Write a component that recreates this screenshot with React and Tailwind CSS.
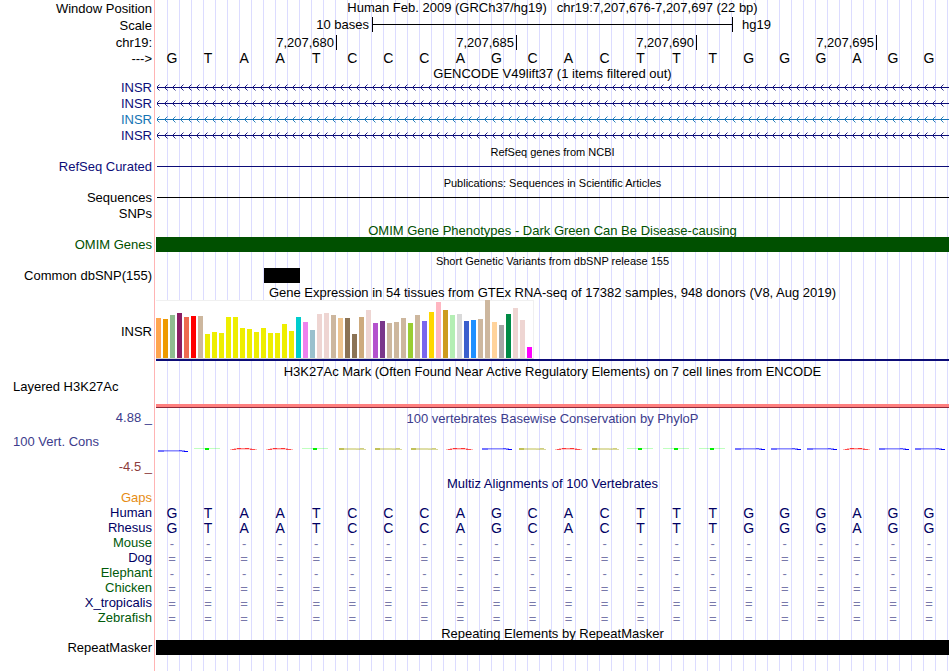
const BASES = "GTAATCCCAGCACTTTGGGAGG".split("");

const TISSUES = [
  [40, "#ffa54f"], [39, "#ee9a00"], [43, "#8fbc8f"], [45, "#8b1c62"], [41, "#ee6a50"], [42, "#ff0000"],
  [42, "#cdb79e"], [24, "#eeee00"], [26, "#eeee00"], [25, "#eeee00"], [41, "#eeee00"], [41, "#eeee00"],
  [30, "#eeee00"], [29, "#eeee00"], [26, "#eeee00"], [30, "#eeee00"], [25, "#eeee00"], [25, "#eeee00"],
  [34, "#eeee00"], [27, "#eeee00"], [41, "#00cdcd"], [36, "#ee82ee"], [28, "#9ac0cd"], [44, "#eed5d2"],
  [45, "#eed5d2"], [43, "#cdb79e"], [40, "#eec591"], [40, "#8b7355"], [24, "#8b7355"], [41, "#cdaa7d"],
  [48, "#eed5d2"], [35, "#b452cd"], [37, "#7a378b"], [35, "#cdb79e"], [36, "#cdb79e"], [40, "#cdb79e"],
  [35, "#9acd32"], [43, "#cdb79e"], [37, "#7a67ee"], [46, "#ffd700"], [56, "#ffb6c1"], [48, "#cd9b1d"],
  [43, "#b4eeb4"], [44, "#d9d9d9"], [37, "#3a5fcd"], [38, "#1e90ff"], [39, "#cdb79e"], [58, "#cdb79e"],
  [36, "#ffd39b"], [33, "#a6a6a6"], [44, "#008b45"], [50, "#eed5d2"], [38, "#eed5d2"], [11, "#ff00ff"],
];

const TRANSCRIPTS = [
  { id: "t1", color: "text-[#0c0c78]" },
  { id: "t2", color: "text-[#0c0c78]" },
  { id: "t3", color: "text-[#1473b4]" },
  { id: "t4", color: "text-[#0c0c78]" },
];

const SPECIES = [
  { name: "Human", color: "text-[#000064]", mark: null },
  { name: "Rhesus", color: "text-[#000064]", mark: null },
  { name: "Mouse", color: "text-[#005a0a]", mark: "-" },
  { name: "Dog", color: "text-[#000064]", mark: "=" },
  { name: "Elephant", color: "text-[#005a0a]", mark: "-" },
  { name: "Chicken", color: "text-[#005a0a]", mark: "=" },
  { name: "X_tropicalis", color: "text-[#000064]", mark: "=" },
  { name: "Zebrafish", color: "text-[#005a0a]", mark: "=" },
];

function Row({ label = "", height, color = "text-black", align = "justify-end pr-[2px]", children }) {
  return (
    <div className={"flex " + height}>
      <div className={"flex w-[154px] shrink-0 items-center whitespace-nowrap " + align + " " + color}>{label}</div>
      <div className="ml-px min-w-0 flex-1">{children}</div>
    </div>
  );
}

function Title({ children, color = "text-black" }) {
  return (
    <div className={"flex h-full items-center justify-center whitespace-nowrap pt-[2px] text-[13px] " + color}>
      {children}
    </div>
  );
}

function SmallTitle({ children }) {
  return (
    <div className="flex h-full items-center justify-center whitespace-nowrap pt-[3px] text-[11px]">{children}</div>
  );
}

function BaseGrid({ children }) {
  return <div className="-ml-px mr-[3px] grid h-full grid-cols-22 items-center text-center">{children}</div>;
}

function Letters({ mark }) {
  return (
    <BaseGrid>
      {BASES.map((b, i) => (
        <span key={i} className={mark ? "pt-px text-[13px] text-[#7878aa]" : "text-[14px] leading-[14px]"}>
          {mark || b}
        </span>
      ))}
    </BaseGrid>
  );
}

function Line({ color }) {
  return (
    <div className="flex h-full items-center">
      <div className={"mt-px ml-[2px] mr-px h-px flex-1 " + color} />
    </div>
  );
}

function Arrows({ id }) {
  return (
    <svg className="block h-full w-full" aria-hidden="true">
      <defs>
        <pattern id={id} x="2" y="0" width="8" height="16" patternUnits="userSpaceOnUse">
          <path d="M0.5 8.5L3.5 5.5M0.5 8.5L3.5 11.5" stroke="currentColor" strokeWidth="0.9" fill="none" />
          <path d="M0 8.5H8" stroke="currentColor" />
        </pattern>
      </defs>
      <svg x="-1" width="100%" height="16">
        <rect x="3" width="100%" height="16" fill={"url(#" + id + ")"} />
      </svg>
    </svg>
  );
}

function Squiggle({ base, low }) {
  return (
    <svg className="block h-[32px] w-[36px]" viewBox="0 0 36 32" aria-hidden="true">
      {base === "G" && (
        <g transform={low ? "translate(0 2)" : undefined}>
          <rect x="4" y="22" width="6" height="2" fill="#0000ff" opacity="0.55" />
          <rect x="10" y="22" width="18" height="1" fill="#0000ff" opacity="0.45" />
          <rect x="10" y="23" width="18" height="1" fill="#0000ff" opacity="0.25" />
          <rect x="25" y="22" width="6" height="1" fill="#0000ff" opacity="0.4" />
          <rect x="28" y="23" width="2" height="1" fill="#0000ff" opacity="0.6" />
          <rect x="30" y="23" width="4" height="1" fill="#0000ff" />
        </g>
      )}
      {base === "T" && (
        <g fill="#00ff00">
          <rect x="4" y="22" width="26" height="1" opacity="0.25" />
          <rect x="15" y="22" width="4" height="2" fill="#00f000" />
        </g>
      )}
      {base === "A" && (
        <g fill="#ff0000">
          <rect x="4" y="23" width="2" height="1" opacity="0.3" />
          <rect x="6" y="23" width="4" height="1" opacity="0.7" />
          <rect x="8" y="22" width="3" height="1" opacity="0.3" />
          <rect x="11" y="22" width="4" height="1" opacity="0.8" />
          <rect x="15" y="22" width="4" height="1" opacity="0.5" />
          <rect x="19" y="22" width="4" height="1" opacity="0.8" />
          <rect x="23" y="22" width="3" height="1" opacity="0.3" />
          <rect x="10" y="23" width="14" height="1" opacity="0.2" />
          <rect x="24" y="23" width="5" height="1" opacity="0.7" />
          <rect x="29" y="23" width="2" height="1" opacity="0.3" />
        </g>
      )}
      {base === "C" && (
        <g fill="#a0a000">
          <rect x="5" y="22" width="5" height="2" opacity="0.65" />
          <rect x="10" y="22" width="12" height="2" opacity="0.35" />
          <rect x="22" y="22" width="4" height="1" opacity="0.3" />
          <rect x="26" y="22" width="4" height="1" opacity="0.5" />
          <rect x="22" y="23" width="10" height="1" opacity="0.4" />
        </g>
      )}
    </svg>
  );
}

export default function App() {
  return (
    <main className="relative bg-white font-['Liberation_Sans',Arial,sans-serif] text-[13px] leading-[15px] text-black">
      <div className="absolute inset-y-0 right-0 left-[154px] border-l border-[#ffb4b4] bg-[linear-gradient(#fff,#fff),linear-gradient(to_right,#dcdcff_1px,transparent_1px)] bg-[length:1px_100%,12px_100%] [background-repeat:no-repeat,repeat]" />
      <div className="relative pb-4">
        <Row label="Window Position" height="h-[17px]">
          <div className="flex h-[15px] items-center justify-center gap-[10px] whitespace-nowrap">
            <span>Human Feb. 2009 (GRCh37/hg19)</span>
            <span>chr19:7,207,676-7,207,697 (22 bp)</span>
          </div>
        </Row>
        <Row label="Scale" height="h-[16px]">
          <div className="grid h-[15px] grid-cols-[217fr_361fr_217fr] items-center whitespace-nowrap">
            <span className="pr-[3px] text-right">10 bases</span>
            <div className="flex h-full items-center border-x border-black">
              <div className="h-px w-full bg-black" />
            </div>
            <span className="pl-[9px]">hg19</span>
          </div>
        </Row>
        <Row label="chr19:" height="h-[18px]">
          <div className="grid h-full grid-cols-[182fr_180fr_180fr_180fr_73fr] items-center text-right">
            {["7,207,680", "7,207,685", "7,207,690", "7,207,695"].map((pos) => (
              <span key={pos} className="border-r border-black pr-[2px]">{pos}</span>
            ))}
          </div>
        </Row>
        <Row label="--->" height="h-[14px]">
          <Letters />
        </Row>

        <Row height="h-[14px]">
          <Title>GENCODE V49lift37 (1 items filtered out)</Title>
        </Row>
        {TRANSCRIPTS.map((t) => (
          <Row key={t.id} label="INSR" height={"h-[16px] " + t.color} color={t.color}>
            <Arrows id={t.id} />
          </Row>
        ))}

        <Row height="h-[15px]">
          <SmallTitle>RefSeq genes from NCBI</SmallTitle>
        </Row>
        <Row label="RefSeq Curated" height="h-[16px]" color="text-[#0c0c78]">
          <Line color="bg-[#0c0c78]" />
        </Row>

        <Row height="h-[15px]">
          <SmallTitle>Publications: Sequences in Scientific Articles</SmallTitle>
        </Row>
        <Row label="Sequences" height="h-[16px]">
          <Line color="bg-black" />
        </Row>
        <Row label="SNPs" height="h-[16px]" />

        <Row height="h-[16px]">
          <Title color="text-[#005000]">OMIM Gene Phenotypes - Dark Green Can Be Disease-causing</Title>
        </Row>
        <Row label="OMIM Genes" height="h-[15px]" color="text-[#005000]">
          <div className="mx-px h-full bg-[#005000]" />
        </Row>

        <Row height="h-[16px]">
          <SmallTitle>Short Genetic Variants from dbSNP release 155</SmallTitle>
        </Row>
        <Row label="Common dbSNP(155)" height="h-[15px]">
          <div className="-ml-px mr-[3px] grid h-full grid-cols-22">
            <div className="col-start-4 ml-[2px] -mr-[2px] bg-black" />
          </div>
        </Row>

        <Row height="h-[17px]">
          <Title>Gene Expression in 54 tissues from GTEx RNA-seq of 17382 samples, 948 donors (V8, Aug 2019)</Title>
        </Row>
        <Row label="INSR" height="h-[61px]" align="justify-end pt-[2px] pr-[2px]">
          <div className="mx-px border-b-2 border-[#0c0c78]">
            <div className="flex h-[59px] w-[378px] items-end gap-[2px] border-t border-r border-b border-t-[#f0f0f0] border-r-[#f0f0f0] border-b-[#d2d2d2] bg-white">
              {TISSUES.map(([h, c], i) => (
                <div key={i} className="w-[5px] shrink-0" style={{ height: h, backgroundColor: c }} />
              ))}
            </div>
          </div>
        </Row>

        <Row height="h-[19px]">
          <Title>H3K27Ac Mark (Often Found Near Active Regulatory Elements) on 7 cell lines from ENCODE</Title>
        </Row>
        <Row label="Layered H3K27Ac" height="h-[28px]" align="justify-start pb-[16px] pl-[13px]">
          <div className="flex h-full items-end px-px">
            <div className="h-1 w-full border-b border-[#8c2838] bg-[#ff8080]" />
          </div>
        </Row>

        <Row label="4.88 _" height="h-[18px]" color="text-[#3c3c8c]">
          <Title color="text-[#3c3c8c]">100 vertebrates Basewise Conservation by PhyloP</Title>
        </Row>
        <Row label="100 Vert. Cons" height="h-[32px]" color="text-[#3c3c8c]" align="justify-start pb-[2px] pl-[13px]">
          <BaseGrid>
            {BASES.map((b, i) => (
              <Squiggle key={i} base={b} low={i === 0} />
            ))}
          </BaseGrid>
        </Row>
        <Row label="-4.5 _" height="h-[17px]" color="text-[#8c3c3c]" />

        <Row height="h-[15px]">
          <Title color="text-[#000064]">Multiz Alignments of 100 Vertebrates</Title>
        </Row>
        <Row label="Gaps" height="h-[15px]" color="text-[#e68c14]" />
        {SPECIES.map((s) => (
          <Row key={s.name} label={s.name} height="h-[15px] text-[#000064]" color={s.color}>
            <Letters mark={s.mark} />
          </Row>
        ))}

        <Row height="h-[15px]">
          <Title>Repeating Elements by RepeatMasker</Title>
        </Row>
        <Row label="RepeatMasker" height="h-[15px]">
          <div className="mx-px h-full bg-black" />
        </Row>
      </div>
    </main>
  );
}
